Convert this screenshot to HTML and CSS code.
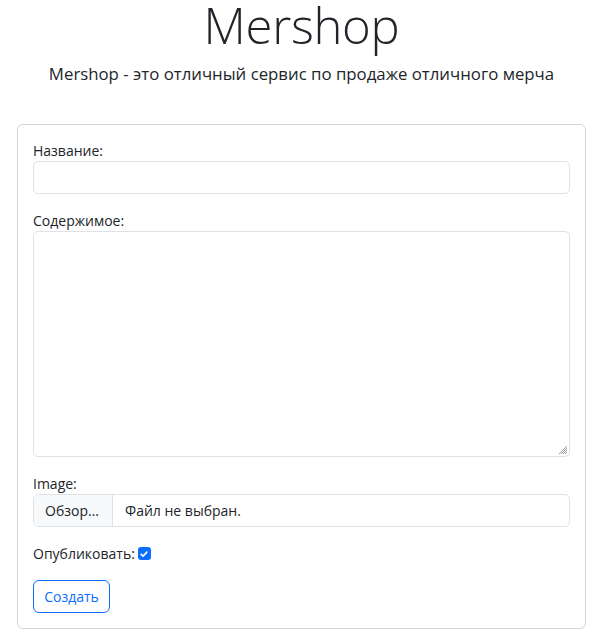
FILE: index.html
```html
<!DOCTYPE html>
<html lang="ru">
<head>
<meta charset="utf-8">
<title>Mershop</title>
<link rel="stylesheet" href="styles.css">
</head>
<body>
<header class="hero">
  <h1 class="hero-title">Mershop</h1>
  <p class="hero-lead">Mershop - это отличный сервис по продаже отличного мерча</p>
</header>
<main class="page">
  <form class="card">
    <div class="field">
      <label class="field-label" for="name">Название:</label>
      <input class="control" id="name" type="text">
    </div>
    <div class="field">
      <label class="field-label" for="content">Содержимое:</label>
      <div class="textarea-wrap">
        <textarea class="control control-area" id="content"></textarea>
        <svg class="grip" width="10" height="10" viewBox="0 0 10 10"><path d="M9 1L1 9M9 3L3 9M9 5L5 9M9 7L7 9" stroke="#9a9a9a" stroke-width="1" fill="none"/></svg>
      </div>
    </div>
    <div class="field">
      <span class="field-label">Image:</span>
      <label class="file-control">
        <span class="file-button">Обзор…</span>
        <span class="file-name">Файл не выбран.</span>
      </label>
    </div>
    <div class="field check-row">
      <span class="check-label">Опубликовать:</span>
      <span class="check-box"><svg width="10" height="10" viewBox="0 0 16 16"><path d="M3.5 8.5l3 3 6-6.5" stroke="#fff" stroke-width="2.6" fill="none" stroke-linecap="round" stroke-linejoin="round"/></svg></span>
    </div>
    <div class="actions">
      <button class="btn-outline" type="button">Создать</button>
    </div>
  </form>
</main>
</body>
</html>
```

FILE: styles.css
```css
* { box-sizing: border-box; }
html, body { margin: 0; padding: 0; }
body {
  font-family: "Open Sans", "Noto Sans", sans-serif;
  font-size: 14px;
  line-height: 21px;
  color: #212529;
  background: #fff;
}
.hero { text-align: center; padding: 0 10px 0 17px; }
.hero-title {
  margin: 0;
  font-weight: 300;
  font-size: 49px;
  line-height: 50px;
  letter-spacing: -0.3px;
  color: #212529;
}
.hero-lead {
  margin: 12px 0 0;
  font-size: 16.8px;
  line-height: 24px;
  font-weight: 400;
}
.page { padding: 38px 10px 0 17px; }
.card {
  border: 1px solid #d3d4d5;
  border-radius: 6px;
  padding: 15px;
  display: flex;
  flex-direction: column;
  gap: 16px;
}
.field { display: flex; flex-direction: column; }
.field-label { display: block; }
.control {
  display: block;
  width: 100%;
  height: 33px;
  border: 1px solid #dee2e6;
  border-radius: 5px;
  font: inherit;
  padding: 5px 11px;
  background: #fff;
}
.textarea-wrap { position: relative; }
.control-area { height: 226px; resize: none; }
.grip { position: absolute; right: 2px; bottom: 2px; }
.file-control {
  display: flex;
  align-items: stretch;
  height: 33px;
  border: 1px solid #dee2e6;
  border-radius: 5px;
  overflow: hidden;
}
.file-button {
  background: #f8f9fa;
  border-right: 1px solid #dee2e6;
  padding: 5px 11px;
  width: 79px;
}
.file-name { padding: 5px 12px; }
.check-row { flex-direction: row; align-items: center; gap: 3px; }
.check-box {
  width: 13px;
  height: 13px;
  border-radius: 3px;
  background: #0d6efd;
  display: inline-flex;
  align-items: center;
  justify-content: center;
}
.actions { display: flex; }
.btn-outline {
  font: inherit;
  color: #0d6efd;
  background: #fff;
  border: 1px solid #0d6efd;
  border-radius: 6px;
  height: 33px;
  padding: 0 10px;
  width: 77px;
}
```
